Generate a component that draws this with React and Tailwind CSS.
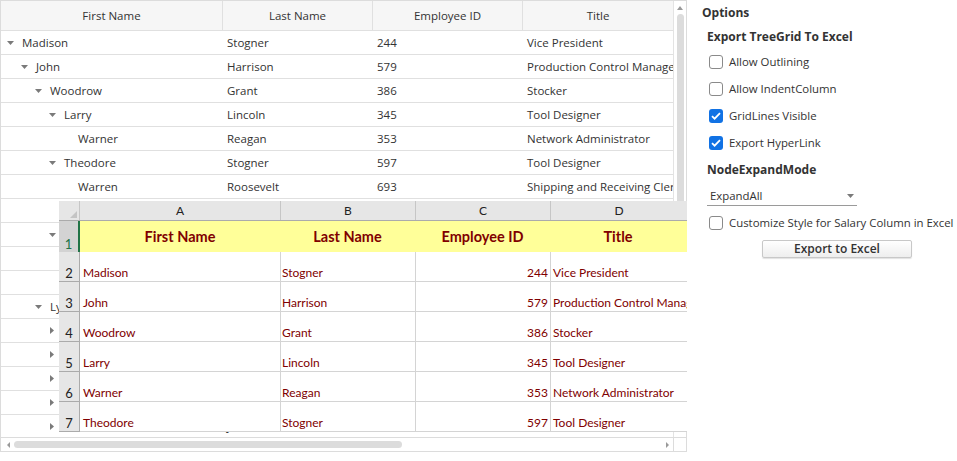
import React from "react";

const treeRows = [
  { l: 0, e: "d", f: "Madison", la: "Stogner", id: 244, t: "Vice President" },
  { l: 1, e: "d", f: "John", la: "Harrison", id: 579, t: "Production Control Manager" },
  { l: 2, e: "d", f: "Woodrow", la: "Grant", id: 386, t: "Stocker" },
  { l: 3, e: "d", f: "Larry", la: "Lincoln", id: 345, t: "Tool Designer" },
  { l: 4, e: null, f: "Warner", la: "Reagan", id: 353, t: "Network Administrator" },
  { l: 3, e: "d", f: "Theodore", la: "Stogner", id: 597, t: "Tool Designer" },
  { l: 4, e: null, f: "Warren", la: "Roosevelt", id: 693, t: "Shipping and Receiving Clerk" },
  { l: 4, e: null, f: "Gerald", la: "Ford", id: 701, t: "Stocker" },
  { l: 3, e: "d", f: "Dwight", la: "Harding", id: 712, t: "Tool Designer" },
  { l: 4, e: null, f: "Herbert", la: "Hoover", id: 733, t: "Stocker" },
  { l: 4, e: null, f: "Calvin", la: "Taft", id: 745, t: "Network Administrator" },
  { l: 2, e: "d", f: "Lyndon", la: "Johnson", id: 802, t: "Production Supervisor" },
  { l: 3, e: "r", f: "Grover", la: "Cleveland", id: 811, t: "Tool Designer" },
  { l: 3, e: "r", f: "Chester", la: "Arthur", id: 823, t: "Stocker" },
  { l: 3, e: "r", f: "James", la: "Polk", id: 837, t: "Buyer" },
  { l: 3, e: "r", f: "Franklin", la: "Pierce", id: 849, t: "Tool Designer" },
  { l: 3, e: "r", f: "Andrew", la: "Jackson", id: 856, t: "Stocker" },
];

const excelRows = [
  ["Madison", "Stogner", 244, "Vice President"],
  ["John", "Harrison", 579, "Production Control Manager"],
  ["Woodrow", "Grant", 386, "Stocker"],
  ["Larry", "Lincoln", 345, "Tool Designer"],
  ["Warner", "Reagan", 353, "Network Administrator"],
  ["Theodore", "Stogner", 597, "Tool Designer"],
];

const Down = () => (
  <svg width="7" height="4" viewBox="0 0 7 4">
    <path d="M0 0h7L3.5 4z" fill="#7a7a7a" />
  </svg>
);

const Right = () => (
  <svg width="4" height="7" viewBox="0 0 4 7">
    <path d="M0 0v7L4 3.5z" fill="#7a7a7a" />
  </svg>
);

const Check = ({ checked, label }) => (
  <div className="flex items-center h-[27px] gap-[6px] pl-[2px] pt-[1px]">
    {checked ? (
      <span className="w-[14px] h-[14px] shrink-0 rounded-[3px] bg-[#1172e4] flex items-center justify-center">
        <svg width="10" height="8" viewBox="0 0 10 8">
          <path d="M1 4.2l2.6 2.5L9 1.2" fill="none" stroke="#fff" strokeWidth="1.8" />
        </svg>
      </span>
    ) : (
      <span className="w-[14px] h-[14px] shrink-0 rounded-[3px] border-[1.5px] border-[#8a8a8a] bg-white" />
    )}
    <span className="text-[11.4px] text-[#333] whitespace-nowrap">{label}</span>
  </div>
);

const TreeGrid = () => (
  <div className="relative w-[687px] h-[452px] shrink-0 border border-[#dcdcdc] flex flex-col text-[11.5px] text-[#333]">
    <div className="flex flex-1 min-h-0">
      <div className="w-[672px] flex flex-col overflow-hidden">
        <div className="flex h-[30px] bg-[#f6f6f6] border-b border-[#e0e0e0] shrink-0">
          <div className="w-[222px] flex items-center justify-center border-r border-[#e0e0e0]">First Name</div>
          <div className="w-[150px] flex items-center justify-center border-r border-[#e0e0e0]">Last Name</div>
          <div className="w-[150px] flex items-center justify-center border-r border-[#e0e0e0]">Employee ID</div>
          <div className="w-[150px] flex items-center justify-center">Title</div>
        </div>
        {treeRows.map((r, i) => (
          <div key={i} className="flex h-[24px] shrink-0 border-b border-[#e0e0e0] bg-white">
            <div className="w-[222px] flex items-center whitespace-nowrap overflow-hidden" style={{ paddingLeft: 6 + 14 * r.l }}>
              <span className="w-[15px] flex items-center">
                {r.e === "d" && <Down />}
                {r.e === "r" && <span className="pl-[1px] flex"><Right /></span>}
              </span>
              {r.f}
            </div>
            <div className="w-[150px] flex items-center pl-[4px] whitespace-nowrap overflow-hidden">{r.la}</div>
            <div className="w-[150px] flex items-center pl-[4px]">{r.id}</div>
            <div className="w-[150px] flex items-center pl-[4px] whitespace-nowrap overflow-hidden">{r.t}</div>
          </div>
        ))}
      </div>
      <div className="w-[13px] border-l border-[#e3e3e3] bg-white flex flex-col items-center pt-[5px]">
        <svg width="6" height="4" viewBox="0 0 6 4">
          <path d="M0 4L3 0l3 4z" fill="#9a9a9a" />
        </svg>
        <div className="mt-[4px] w-[7px] h-[320px] rounded-full bg-[#dcdcdc]" />
      </div>
    </div>
    <div className="h-[14px] border-t border-[#dcdcdc] flex shrink-0">
      <div className="w-[672px] flex items-center pl-[6px] pr-[4px]">
        <svg width="3" height="6" viewBox="0 0 3 6">
          <path d="M3 0v6L0 3z" fill="#9a9a9a" />
        </svg>
        <div className="ml-[4px] w-[388px] h-[7px] rounded-full bg-[#dcdcdc]" />
        <div className="flex-1" />
        <svg width="3" height="6" viewBox="0 0 3 6">
          <path d="M0 0v6L3 3z" fill="#9a9a9a" />
        </svg>
      </div>
      <div className="w-[13px] border-l border-[#dcdcdc]" />
    </div>

    {/* Excel preview over the grid */}
    <div className="absolute left-[58px] top-[200px] w-[628px] h-[231px] bg-white flex flex-col font-['Lato',sans-serif] text-[12px]">
      <div className="flex h-[20px] bg-[#e6e6e6] border-b border-[#ababab] text-[#222] text-[12px]">
        <div className="w-[21px] border-r border-[#c6c6c6] relative">
          <svg className="absolute right-[2px] bottom-[2px]" width="7" height="7" viewBox="0 0 7 7">
            <path d="M7 0v7H0z" fill="#c4c4c4" />
          </svg>
        </div>
        <div className="w-[201px] border-r border-[#c6c6c6] flex items-center justify-center">A</div>
        <div className="w-[135px] border-r border-[#c6c6c6] flex items-center justify-center">B</div>
        <div className="w-[135px] border-r border-[#c6c6c6] flex items-center justify-center">C</div>
        <div className="w-[136px] flex items-center justify-center">D</div>
      </div>
      <div className="flex h-[31px]">
        <div className="w-[21px] bg-[#d3d3d3] border-r-2 border-[#217346] flex items-end justify-center leading-[15px] text-[#217346] text-[13px]">1</div>
        <div className="flex flex-1 bg-[#ffff99] text-[#800000] font-bold text-[14.5px]">
          <div className="w-[200px] flex items-center justify-center">First Name</div>
          <div className="w-[135px] flex items-center justify-center">Last Name</div>
          <div className="w-[135px] flex items-center justify-center">Employee ID</div>
          <div className="w-[136px] flex items-center justify-center">Title</div>
        </div>
      </div>
      {excelRows.map((r, i) => (
        <div key={i} className="flex h-[30px] text-[#800000] leading-[15px]">
          <div className="w-[21px] bg-[#e6e6e6] border-r border-b border-[#ababab] flex items-end justify-center text-[#222] text-[13px]">{i + 2}</div>
          <div className="w-[201px] border-r border-b border-[#d4d4d4] flex items-end pl-[3px] pb-[1px]">{r[0]}</div>
          <div className="w-[135px] border-r border-b border-[#d4d4d4] flex items-end pl-[1px] pb-[1px]">{r[1]}</div>
          <div className="w-[135px] border-r border-b border-[#d4d4d4] flex items-end justify-end pr-[2px] pb-[1px]">{r[2]}</div>
          <div className="w-[136px] border-b border-[#d4d4d4] flex items-end pl-[2px] pb-[1px] whitespace-nowrap overflow-hidden">{r[3]}</div>
        </div>
      ))}
    </div>
  </div>
);

export default function App() {
  return (
    <div className="w-[957px] h-[461px] bg-white flex font-['Open_Sans',sans-serif] overflow-hidden">
      <TreeGrid />
      <div className="flex-1 pl-[15px] flex flex-col text-[#333]">
        <div className="h-[26px] flex items-center font-bold text-[12px]">Options</div>
        <div className="pl-[5px] flex flex-col">
          <div className="h-[22px] flex items-center font-bold text-[12px]">Export TreeGrid To Excel</div>
          <Check label="Allow Outlining" />
          <Check label="Allow IndentColumn" />
          <Check checked label="GridLines Visible" />
          <Check checked label="Export HyperLink" />
          <div className="h-[27px] flex items-center font-bold text-[12px]">NodeExpandMode</div>
          <div className="w-[150px] h-[23px] border-b border-[#9a9a9a] flex items-end justify-between pl-[3px] pr-[3px] pb-[1px] text-[11.4px]">
            <span>ExpandAll</span>
            <span className="pb-[6px] flex"><Down /></span>
          </div>
          <div className="mt-[3px]">
            <Check label="Customize Style for Salary Column in Excel" />
          </div>
          <div className="ml-[55px] mt-[4px] w-[150px] h-[18px] border border-[#c8c8c8] rounded-[2px] bg-gradient-to-b from-white to-[#eeeeee] shadow-[0_1px_1px_rgba(0,0,0,0.12)] flex items-center justify-center text-[12px] font-semibold text-[#333]">
            Export to Excel
          </div>
        </div>
      </div>
    </div>
  );
}
